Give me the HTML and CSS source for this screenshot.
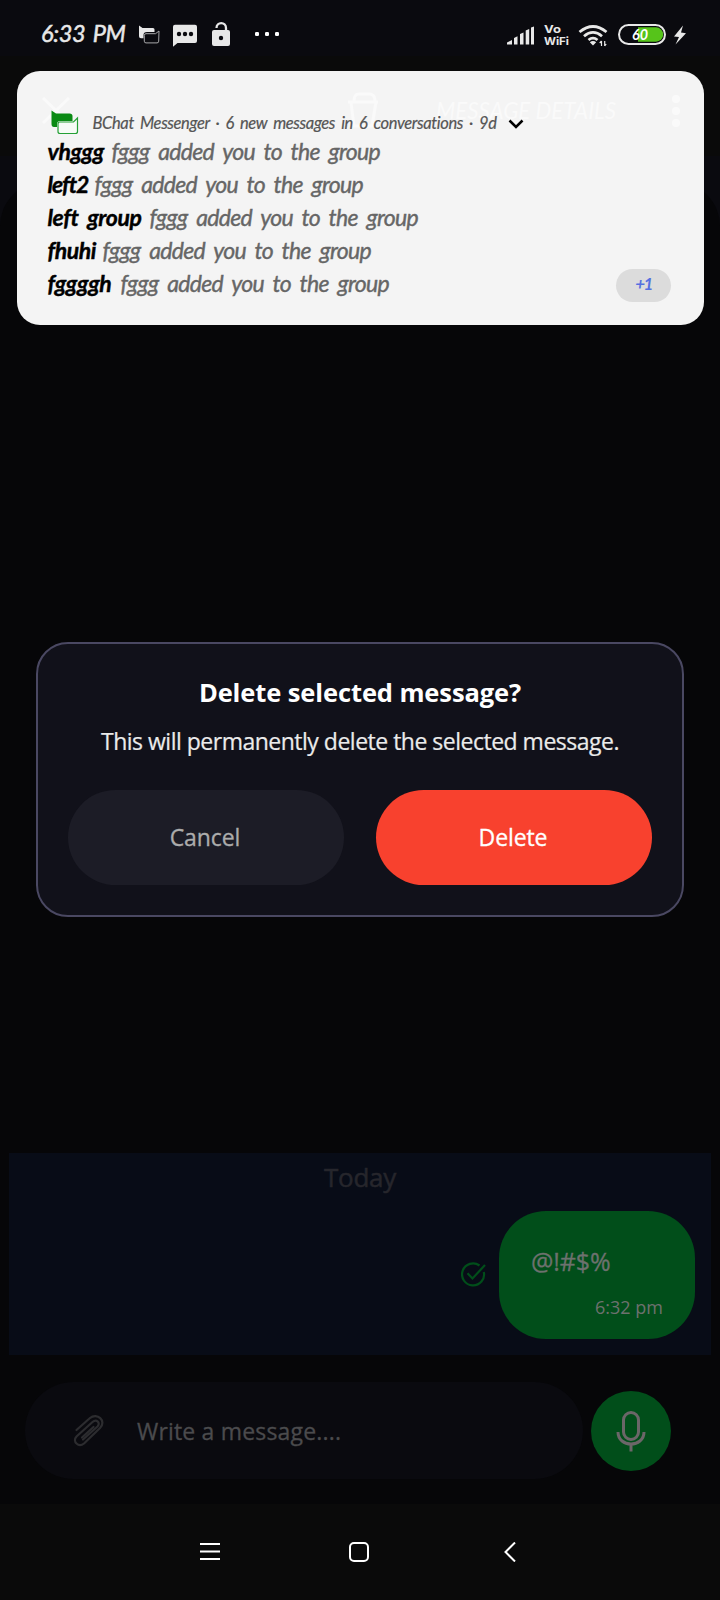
FILE: index.html
```html
<!DOCTYPE html>
<html lang="en">
<head>
<meta charset="utf-8">
<title>BChat</title>
<link rel="stylesheet" href="styles.css">
</head>
<body>
<div class="phone">
  <header class="status">
    <span class="clock">6:33 PM</span>
    <svg class="left-icons" width="150" height="32" viewBox="134 18 150 32">
      <path d="M139 25.500l3.500 2.500H153q1.500 0 1.500 1.500v2.500H147q-3.500 0-3.500 3v3.300H141q-2 0-2-2z" fill="#e8e8e8"/>
      <path d="M159 31l-3.500 2.700H146q-1.700 0-1.700 1.700v5.800q0 1.700 1.700 1.700h11q1.700 0 1.700-1.700z" fill="none" stroke="#a8a8aa" stroke-width="1"/>
      <path d="M175 24.700h20q2 0 2 2V41q0 2-2 2H177.500l-4.500 3.700V26.700q0-2 2-2z" fill="#e8e8e8"/>
      <g fill="#0a0a0f"><circle cx="179" cy="34" r="2.200"/><circle cx="185" cy="34" r="2.200"/><circle cx="191" cy="34" r="2.200"/></g>
      <path d="M216.500 28c0-6.500 9.500-6.500 9.500 0v3" fill="none" stroke="#e8e8e8" stroke-width="2.300"/>
      <rect x="212" y="30" width="18" height="16" rx="2" fill="#e8e8e8"/><circle cx="221" cy="38" r="2.200" fill="#0a0a0f"/>
      <g fill="#fff"><rect x="255" y="32" width="4" height="4" rx="1.300"/><rect x="265" y="32" width="4" height="4" rx="1.300"/><rect x="275" y="32" width="4" height="4" rx="1.300"/></g>
    </svg>
    <svg class="right-icons" width="182" height="32" viewBox="506 18 182 32">
      <path d="M507 44.500v-2l5-2.500v4.500zM514 44.500V38l3.500-1.700v8.200zM520 44.500V34l3.500-1.500v12zM525.700 44.500V30.500l3.500-1.500v15.500zM531 44.500V27.500l3-1v18z" fill="#e8e8e8"/>
      <g class="vo"><text x="544" y="33.300" textLength="17" lengthAdjust="spacingAndGlyphs">Vo</text><text x="544" y="45.200" textLength="25" lengthAdjust="spacingAndGlyphs">WiFi</text></g>
      <g fill="none" stroke="#e8e8e8" stroke-width="2.800"><path d="M579.500 32q13.500-11 27 0"/><path d="M584 36.200q9-7.600 18 0"/><path d="M588.500 40q4.500-3.700 9 0"/></g>
      <path d="M589.800 42.300q3.200-2.500 6.400 0L593 45.500z" fill="#e8e8e8"/>
      <path d="M601.500 41v5M604.700 46v-5M599.700 43l1.800-2M606.200 44l-1.500 2" fill="none" stroke="#e8e8e8" stroke-width="1.200"/>
      <rect x="619" y="25" width="46" height="19" rx="9.500" fill="none" stroke="#e8e8e8" stroke-width="2"/>
      <path d="M638 27.300h18a7.200 7.200 0 0 1 0 14.400h-18z" fill="#56c41a"/>
      <text class="pct" x="632" y="39.800" textLength="16" lengthAdjust="spacingAndGlyphs">60</text>
      <path d="M683 25.500L674 36.500l5 .500-3.500 7.500L686 33.300l-5-.800z" fill="#e8e8e8"/>
    </svg>
  </header>

  <main class="chat">
    <div class="toolbar"></div>
    <div class="conversation">
      <section class="dialog">
        <h1>Delete selected message?</h1>
        <p>This will permanently delete the selected message.</p>
        <div class="actions"><button class="cancel">Cancel</button><button class="delete">Delete</button></div>
      </section>
      <section class="selected">
        <div class="day">Today</div>
        <div class="message">
          <svg width="26" height="26" viewBox="0 0 26 26" fill="none" stroke="#014e1a" stroke-width="2.200"><path d="M18.500 3.500A11 11 0 1 0 22.800 10"/><path d="M6.500 11.200l5 5.300L24 3"/></svg>
          <div class="bubble"><span class="body">@!#$%</span><time>6:32 pm</time></div>
        </div>
      </section>
      <footer class="composer">
        <div class="input">
          <svg width="32" height="34" viewBox="0 0 32 34" fill="none" stroke="#2c2c2f" stroke-width="2.200" stroke-linecap="round" stroke-linejoin="round"><path d="M3.500 16L17 4C24-2 34 7 27 14L11 29.500C5.500 34 -1 27.500 3.500 22.500L19.500 8C23.500 4.500 28 9 24.500 12.500L10 25.500"/><path d="M9 23.500L20.500 13"/></svg>
          <span>Write a message....</span>
        </div>
        <div class="mic"><svg width="30" height="42" viewBox="0 0 30 42" fill="none" stroke="#6b6668" stroke-width="3"><rect x="7.500" y="2.500" width="15" height="27" rx="7.500"/><path d="M2 22c0 16 26 16 26 0M15 34v7.500"/></svg></div>
      </footer>
    </div>
  </main>

  <nav class="navbar">
    <svg width="20" height="20" viewBox="0 0 20 20" fill="none" stroke="#fff" stroke-width="2"><path d="M0 2h20M0 9.500h20M0 17h20"/></svg>
    <svg width="20" height="20" viewBox="0 0 20 20" fill="none" stroke="#fff" stroke-width="2"><rect x="1" y="1" width="18" height="18" rx="4"/></svg>
    <svg width="12" height="20" viewBox="0 0 12 20" fill="none" stroke="#fff" stroke-width="2"><path d="M11 .500L1.500 10 11 19.500"/></svg>
  </nav>

  <aside class="notification">
    <svg class="ghost" width="687" height="60" viewBox="17 85 687 60" fill="none" stroke="#fafafa" stroke-width="3">
      <path d="M43 98l26 25M69 98L43 123"/><path d="M348 102h30M351 102l3 24h18l4-24M354 101q0-7 5-7h10q6 0 6 7"/>
      <text x="436" y="119" textLength="180" lengthAdjust="spacingAndGlyphs">MESSAGE DETAILS</text>
      <g fill="#fafafa" stroke="none"><circle cx="676" cy="99" r="4"/><circle cx="676" cy="111" r="4"/><circle cx="676" cy="123" r="4"/></g>
    </svg>
    <div class="app">
      <svg width="28" height="25" viewBox="0 0 28 25"><path d="M.500.500L5 3.500h13.500Q21.500 3.500 21.500 6v5H9.500Q6 11 6 14v3H3Q.500 17 .500 14z" fill="#0a8a14"/><path d="M26.500 8l-4 4H9q-2 0-2 2v7.500q0 2 2 2h15.500q2 0 2-2z" fill="#f6fbf6" stroke="#24a035" stroke-width="1.200"/></svg>
      <span class="app-text">BChat Messenger · 6 new messages in 6 conversations · 9d</span>
      <svg width="16" height="10" viewBox="0 0 16 10" fill="none" stroke="#000" stroke-width="2.500"><path d="M1.500 1.500L8 8l6.500-6.500"/></svg>
    </div>
    <ul>
      <li><b class="w64">vhggg</b><span>fggg added you to the group</span></li>
      <li><b class="w47">left2</b><span>fggg added you to the group</span></li>
      <li><b class="w102">left group</b><span>fggg added you to the group</span></li>
      <li><b class="w55">fhuhi</b><span>fggg added you to the group</span></li>
      <li><b class="w73">fggggh</b><span>fggg added you to the group</span></li>
    </ul>
    <span class="more">+1</span>
  </aside>
</div>
</body>
</html>
```
FILE: styles.css
```css
* { box-sizing: border-box; }
body { margin: 0; background: #060608; font-family: "Open Sans", sans-serif; }
.phone { position: relative; width: 720px; height: 1600px; display: flex; flex-direction: column; overflow: hidden; }
.status { height: 56px; background: #0a0a0f; display: flex; align-items: flex-start; padding: 18px 32px 0 41px; }
.clock { width: 93px; font: italic 23.5px/31px Lato, sans-serif; color: #e8e8e8; white-space: nowrap; letter-spacing: -.3px; word-spacing: 2px; -webkit-text-stroke: .5px #e8e8e8; }
.right-icons { margin-left: auto; }
.vo { font: bold 11px Inter, sans-serif; fill: #e8e8e8; }
.pct { font: italic bold 14.5px Lato, sans-serif; fill: #fff; }
.chat { flex: 1; background: #0a0a0f; display: flex; flex-direction: column; }
.toolbar { height: 100px; background: #0a0a0a; }
.conversation { flex: 1; margin-top: 26px; background: #060608; border-radius: 44px 44px 0 0; padding-top: 460px; }
.dialog { margin: 0 36px; height: 275px; border: 2px solid #4a4862; border-radius: 32px; background: #11111a; padding: 29px 30px 30px; text-align: center; }
h1 { margin: 0; font-size: 25.5px; line-height: 38px; font-weight: 700; color: #fff; white-space: nowrap; letter-spacing: -.1px; }
.dialog p { margin: 13px -30px 0; font-size: 23px; line-height: 34px; color: #ebebeb; white-space: nowrap; letter-spacing: -.5px; -webkit-text-stroke: .2px; }
.actions { display: flex; gap: 32px; margin-top: 32px; }
.actions button { flex: 1; height: 95px; border: 0; border-radius: 47.5px; padding: 0 2px 2px 0; font: 23px "Open Sans", sans-serif; letter-spacing: -.1px; -webkit-text-stroke: .3px; }
.cancel { background: #1c1c26; color: #acacac; }
.delete { background: #f8412e; color: #fff; }
.selected { margin: 236px 9px 0; height: 202px; background: #080c17; }
.day { height: 58px; font-size: 26px; line-height: 48px; text-align: center; color: #26262c; letter-spacing: -.3px; -webkit-text-stroke: .5px; }
.message { display: flex; justify-content: flex-end; align-items: center; gap: 12px; padding-right: 16px; }
.bubble { width: 196px; height: 128px; border-radius: 47px; background: #014e1a; padding: 31px 32px; color: #6d716e; display: flex; flex-direction: column; }
.body { font-size: 25px; line-height: 38px; letter-spacing: -.1px; -webkit-text-stroke: .3px; }
time { align-self: flex-end; font-size: 18px; line-height: 24px; margin-top: 15px; }
.composer { display: flex; align-items: center; padding: 27px 49px 0 25px; gap: 8px; }
.input { width: 558px; height: 97px; border-radius: 48.5px; background: #0a0a0f; display: flex; align-items: center; padding-left: 48px; gap: 32px; font-size: 23px; color: #4b4b4d; letter-spacing: .18px; -webkit-text-stroke: .3px; }
.mic { width: 80px; height: 80px; border-radius: 50%; background: #014e1a; display: flex; align-items: center; justify-content: center; }
.navbar { height: 96px; background: #0a0a0a; display: flex; align-items: center; padding-left: 200px; }
.navbar svg + svg { margin-left: 129px; }
.navbar svg:last-child { margin-left: 135px; }
.notification { position: absolute; left: 16.5px; top: 71px; width: 687px; height: 253.5px; border-radius: 23px; background: #f4f4f4; padding: 38px 32px 0 31px; font-family: Lato, sans-serif; font-style: italic; }
.ghost { position: absolute; left: 0; top: 14px; }
.ghost text { font-size: 24px; fill: #fafafa; stroke: none; }
.app { position: relative; display: flex; align-items: center; height: 27px; padding-left: 3px; }
.app-text { width: 409px; margin-left: 14px; font-size: 16.5px; color: #555; white-space: nowrap; word-spacing: 2.6px; letter-spacing: -.37px; -webkit-text-stroke: .2px; }
.app svg:last-child { margin-left: 6px; margin-top: 2px; }
ul { position: relative; top: -1px; margin: 0; padding: 0; list-style: none; }
li { height: 33px; display: flex; font-size: 23px; line-height: 33px; white-space: nowrap; color: #666; letter-spacing: -.7px; word-spacing: 4.1px; -webkit-text-stroke: .4px; }
li b { color: #000; letter-spacing: -.4px; }
.w64 { width: 64px; } .w47 { width: 47px; letter-spacing: -1px; } .w102 { width: 102px; } .w55 { width: 55px; } .w73 { width: 73px; }
.more { position: absolute; right: 32.5px; bottom: 22.5px; width: 55px; height: 33px; border-radius: 17px; background: #dcdcdc; color: #5570e0; font-size: 17px; line-height: 29px; text-align: center; font-weight: 700; letter-spacing: -1.5px; }
```
